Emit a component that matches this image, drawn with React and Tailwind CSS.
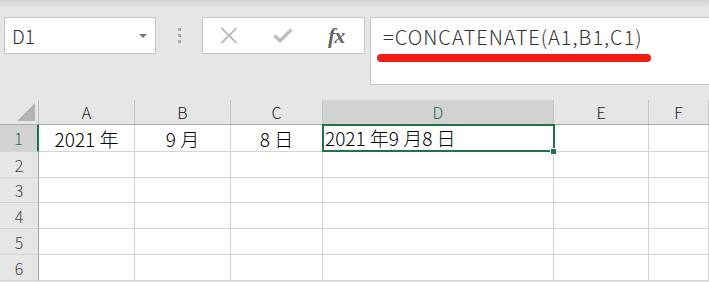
import React from "react";

const cols = [
  { key: "A", w: "w-[96px]" },
  { key: "B", w: "w-[96px]" },
  { key: "C", w: "w-[92px]" },
  { key: "D", w: "w-[231px]" },
  { key: "E", w: "w-[95px]" },
  { key: "F", w: "w-[60px]" },
];

const rowHeights = ["h-[27px]", "h-[26px]", "h-[25px]", "h-[26px]", "h-[26px]", "h-[26px]"];

const row1 = { A: "2021 年", B: "9 月", C: "8 日" };

const font = { fontFamily: '"Noto Sans CJK JP", "Noto Sans", sans-serif' };

const App = () => {
  return (
    <div className="w-[709px] h-[282px] overflow-hidden bg-[#e6e6e6] relative font-light" style={font}>
      {/* top shadow */}
      <div className="h-[17px] bg-gradient-to-b from-[#d4d4d4] to-[#e6e6e6] to-50%" />

      {/* Formula bar */}
      <div className="flex items-start h-[68px]">
        <div className="ml-[4px] w-[152px] h-[37px] bg-white border border-[#c6c6c6] flex items-center justify-between pl-[7px] pr-[8px]">
          <span className="text-[19px] text-[#333] leading-none">D1</span>
          <span className="w-0 h-0 border-l-[4px] border-r-[4px] border-t-[4px] border-l-transparent border-r-transparent border-t-[#777]" />
        </div>
        <div className="w-[46px] h-[37px] flex flex-col items-center justify-center gap-[3px]">
          <span className="w-[3px] h-[3px] bg-[#aaa]" />
          <span className="w-[3px] h-[3px] bg-[#aaa]" />
          <span className="w-[3px] h-[3px] bg-[#aaa]" />
        </div>
        <div className="w-[163px] h-[37px] bg-white border border-[#c6c6c6] flex items-center">
          <svg className="ml-[17px]" width="18" height="17" viewBox="0 0 18 17">
            <path d="M1.5 1 L16.5 16 M16.5 1 L1.5 16" stroke="#bdbdbd" strokeWidth="2" fill="none" />
          </svg>
          <svg className="ml-[35px]" width="20" height="15" viewBox="0 0 20 15">
            <path d="M1.5 7.5 L7 13 L18.5 1.5" stroke="#bdbdbd" strokeWidth="3.2" fill="none" />
          </svg>
          <span
            className="ml-[35px] text-[22px] italic font-bold text-[#666] leading-none tracking-[-1px]"
            style={{ fontFamily: '"Liberation Serif", "DejaVu Serif", serif' }}
          >
            fx
          </span>
        </div>
        <div className="ml-[5px] flex-1 h-[68px] bg-white border border-[#c6c6c6] border-r-0 pl-[12px] pt-[6px] relative">
          <div className="text-[20px] text-[#333] leading-[26px] tracking-[1px]">=CONCATENATE(A1,B1,C1)</div>
          <div className="absolute left-[6px] top-[36px] w-[274px] h-[8px] rounded-full bg-[#f41c12]" />
        </div>
      </div>

      <div className="h-[15px]" />

      {/* Column headers */}
      <div className="flex h-[25px] border-b border-[#ababab]">
        <div className="w-[39px] shrink-0 border-r border-[#c0c0c0] flex items-end justify-end pr-[3px] pb-[3px]">
          <svg width="18" height="18" viewBox="0 0 18 18">
            <polygon points="18,0 18,18 0,18" fill="#b4b4b4" />
          </svg>
        </div>
        {cols.map((c) => (
          <div
            key={c.key}
            className={`${c.w} shrink-0 border-r border-[#c6c6c6] flex items-center justify-center text-[16px] leading-none ${
              c.key === "D" ? "bg-[#d2d2d2] text-[#217346]" : "text-[#222]"
            }`}
          >
            {c.key}
          </div>
        ))}
      </div>

      {/* Rows */}
      {rowHeights.map((h, i) => (
        <div key={i} className={`flex ${h} relative ${i === 0 ? "z-20" : ""}`}>
          <div
            className={`w-[39px] shrink-0 border-b border-[#d4d4d4] flex items-center justify-center text-[16px] leading-none ${
              i === 0 ? "bg-[#d2d2d2] text-[#217346] border-r-2 border-r-[#217346]" : "bg-[#e6e6e6] text-[#444] border-r border-r-[#9e9e9e]"
            }`}
          >
            {i + 1}
          </div>
          {cols.map((c) => (
            <div
              key={c.key}
              className={`${c.w} shrink-0 bg-white border-r border-b border-[#d4d4d4] flex items-center justify-center text-[19px] text-black leading-none relative ${
                i === 0 && c.key === "D" ? "z-10" : ""
              }`}
            >
              {i === 0 && row1[c.key]}
              {i === 0 && c.key === "D" && (
                <>
                  <div className="absolute -left-px -top-px w-[233px] h-[28px] border-2 border-[#217346]" />
                  <span className="absolute left-[2px] top-[3px] whitespace-nowrap">2021 年9 月8 日</span>
                  <div className="absolute right-[-4px] bottom-[-4px] w-[7px] h-[7px] bg-[#217346] border border-white" />
                </>
              )}
            </div>
          ))}
        </div>
      ))}
    </div>
  );
};

export default App;
